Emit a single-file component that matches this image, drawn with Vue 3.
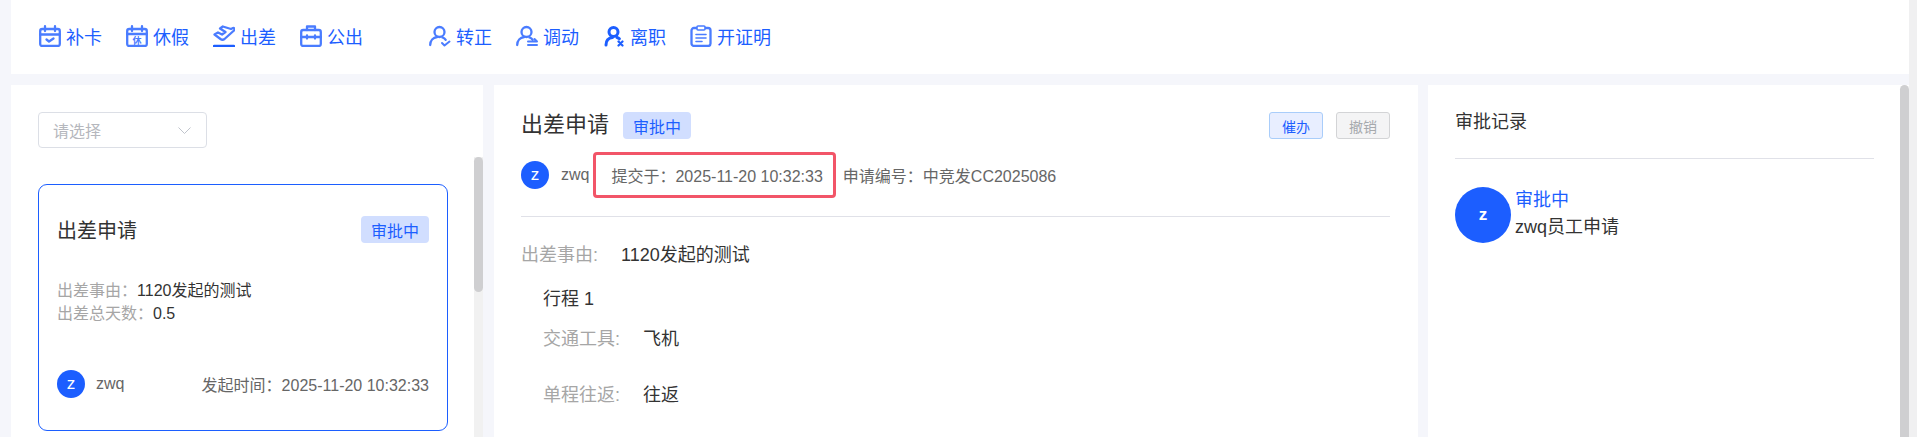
<template>
  <div class="page">
    <div class="content">
      <div class="topbar">
        <div class="group">
          <a v-for="item in leftLinks" :key="item.text" class="link">
            <svg class="ico" viewBox="0 0 22 22" fill="none" stroke="#4a7cff" stroke-width="2.300" stroke-linecap="round" stroke-linejoin="round">
              <g v-if="item.icon === 'card'">
                <rect x="1.200" y="4" width="19.600" height="17" rx="2" />
                <path d="M1 9.500h20M6 1.200v4.800M16 1.200v4.800" />
                <path d="M7.500 14.500l2.500 2 4.500-3" />
              </g>
              <g v-else-if="item.icon === 'rest'">
                <rect x="1.200" y="4" width="19.600" height="17" rx="2" />
                <path d="M1 9h20M6 1.200v4.800M16 1.200v4.800" />
                <text x="11" y="18.500" text-anchor="middle" font-size="9" font-weight="700" fill="#4a7cff" stroke="none">休</text>
              </g>
              <g v-else-if="item.icon === 'trip'">
                <path d="M1.500 9.500L5 7.500l4 2 3.500-2.500L7 3.500 9.800 1.500 18 4l2-1c1.300-.4 2 1.600 1 2.500L11.500 14c-1.300 1-2.700 1-4 0z" />
                <path d="M1 21h20" stroke="#1c5eff" />
              </g>
              <g v-else>
                <rect x="1.200" y="5" width="19.600" height="16" rx="2" />
                <path d="M7 5V1.500h8V5M1 12h20M7 10.500v3M15 10.500v3" />
              </g>
            </svg>
            <span>{{ item.text }}</span>
          </a>
        </div>
        <div class="group">
          <a v-for="item in rightLinks" :key="item.text" class="link">
            <svg class="ico" viewBox="0 0 22 22" fill="none" stroke="#4a7cff" stroke-width="2.300" stroke-linecap="round" stroke-linejoin="round">
              <g v-if="item.icon === 'regular'">
                <circle cx="10.500" cy="7" r="5" />
                <path d="M1.200 20c0-4.500 3-7.500 7-8M13.500 12.500c1.500.5 2.500 1.300 3.200 2.300" />
                <path d="M13 18l2.500 2.500 5-4" stroke-width="2" />
              </g>
              <g v-else-if="item.icon === 'move'">
                <circle cx="10.500" cy="7" r="5" />
                <path d="M1.200 20c0-4.500 3-7.500 7-8M13.500 12.500c1.500.5 2.500 1.300 3.200 2.300" />
                <path d="M12 16.500h9l-2.500-2.500M21 20h-9" stroke-width="2" />
              </g>
              <g v-else-if="item.icon === 'leave'" stroke="#1c5eff" stroke-width="3">
                <circle cx="10.500" cy="7" r="4.500" />
                <path d="M3 20c0-4.500 2.500-7 6.500-7.500M14 12.500c1 .3 1.800.7 2.400 1.300" />
                <path d="M15.500 16.500l4 4M19.500 16.500l-4 4" stroke-width="2.200" />
              </g>
              <g v-else>
                <rect x="1.500" y="3" width="19" height="18" rx="2.500" />
                <rect x="7" y="1" width="8" height="4" rx="1" fill="#fff" stroke-width="1.600" />
                <path d="M6 9.500h10M6 13h10M6 16.500h6" stroke-width="1.600" />
              </g>
            </svg>
            <span>{{ item.text }}</span>
          </a>
        </div>
      </div>

      <div class="columns">
        <div class="left">
          <div class="select">
            <span>请选择</span>
            <svg width="15" height="9" viewBox="0 0 15 9" fill="none" stroke="#c0c4cc" stroke-width="1"><path d="M1.500 1.500l6 6 6-6" /></svg>
          </div>
          <div class="card">
            <div class="card-head">
              <span class="card-title">出差申请</span>
              <span class="tag">审批中</span>
            </div>
            <div class="card-rows">
              <div><span class="label">出差事由：</span><span class="val">1120发起的测试</span></div>
              <div><span class="label">出差总天数：</span><span class="val">0.5</span></div>
            </div>
            <div class="card-foot">
              <div class="who">
                <span class="avatar">z</span>
                <span class="gray">zwq</span>
              </div>
              <span class="gray">发起时间：2025-11-20 10:32:33</span>
            </div>
          </div>
          <div class="thumb left-thumb"></div>
        </div>

        <div class="middle">
          <div class="mid-head">
            <div class="mid-title">
              <h2>出差申请</h2>
              <span class="tag">审批中</span>
            </div>
            <div class="btns">
              <span class="btn urge">催办</span>
              <span class="btn revoke">撤销</span>
            </div>
          </div>
          <div class="meta">
            <span class="avatar">z</span>
            <span class="gray zwq">zwq</span>
            <span class="gray submit">提交于：2025-11-20 10:32:33<i class="mark"></i></span>
            <span class="gray">申请编号：中竞发CC2025086</span>
          </div>
          <div class="detail">
            <div class="line"><span class="dlabel first">出差事由:</span><span class="val">1120发起的测试</span></div>
            <div class="trip">
              <div class="trip-title">行程 1</div>
              <div class="line tool"><span class="dlabel">交通工具:</span><span class="val">飞机</span></div>
              <div class="line way"><span class="dlabel">单程往返:</span><span class="val">往返</span></div>
            </div>
          </div>
        </div>

        <div class="right">
          <div class="right-title">审批记录</div>
          <div class="record">
            <span class="avatar big">z</span>
            <div class="record-text">
              <div class="blue">审批中</div>
              <div class="val">zwq员工申请</div>
            </div>
          </div>
          <div class="thumb page-thumb"></div>
        </div>
      </div>
    </div>
    <div class="track"></div>
  </div>
</template>

<script setup>
const leftLinks = [
  { text: '补卡', icon: 'card' },
  { text: '休假', icon: 'rest' },
  { text: '出差', icon: 'trip' },
  { text: '公出', icon: 'out' }
]
const rightLinks = [
  { text: '转正', icon: 'regular' },
  { text: '调动', icon: 'move' },
  { text: '离职', icon: 'leave' },
  { text: '开证明', icon: 'cert' }
]
</script>

<style>
html, body { margin: 0; overflow: hidden; }
</style>

<style scoped>
.page { display: flex; height: 437px; overflow: hidden; background: #f5f6fb; font-family: "Liberation Sans", "Noto Sans CJK SC", sans-serif; color: #333; }
.content { flex: 1; min-width: 0; padding-left: 11px; display: flex; flex-direction: column; gap: 11px; }
.track { width: 8px; background: #f0f0f1; }
.topbar { height: 74px; box-sizing: border-box; padding: 0 0 3px 28px; flex: none; background: #fff; display: flex; align-items: center; gap: 66px; color: #1c5eff; font-size: 18px; }
.group { display: flex; gap: 24px; }
.link { display: flex; align-items: center; gap: 5px; height: 24px; }
.ico { width: 22px; height: 22px; flex: none; }
.columns { flex: 1; display: flex; gap: 10px; min-height: 0; }
.left, .middle, .right { background: #fff; position: relative; overflow: hidden; }
.left { width: 472px; margin-right: 1px; padding: 27px 0 0 27px; box-sizing: border-box; }
.left::after { content: ""; position: absolute; right: 0; top: 72px; bottom: 0; width: 9px; background: #f1f1f1; }
.thumb { position: absolute; width: 9px; right: 0; background: #cfcfd1; border-radius: 5px; z-index: 1; }
.left-thumb { top: 72px; height: 135px; }
.page-thumb { top: 0; bottom: -10px; border-radius: 5px 5px 0 0; }
.select { width: 169px; height: 36px; box-sizing: border-box; border: 1px solid #dcdfe6; border-radius: 4px; display: flex; align-items: center; justify-content: space-between; padding: 0 14px; color: #b5b7bd; font-size: 16px; }
.card { width: 410px; height: 247px; margin-top: 36px; box-sizing: border-box; border: 1px solid #1c5eff; border-radius: 9px; padding: 30px 18px 0 19px; display: flex; flex-direction: column; }
.card-head { display: flex; align-items: center; justify-content: space-between; }
.card-title { font-size: 20px; margin-left: -1px; }
.tag { display: inline-flex; align-items: center; justify-content: center; width: 68px; height: 27px; background: #d1deff; color: #1c5eff; border-radius: 4px; font-size: 16px; }
.card-rows { margin-top: 35px; margin-left: -1px; font-size: 16px; line-height: 23px; }
.label { color: #a6a6a6; }
.val { color: #333; }
.card-foot { margin-top: 45px; margin-left: -1px; display: flex; align-items: center; justify-content: space-between; font-size: 16px; }
.who { display: flex; align-items: center; gap: 11px; }
.gray { color: #666; }
.avatar { width: 28px; height: 28px; border-radius: 50%; background: #1c5eff; color: #fff; display: inline-flex; align-items: center; justify-content: center; font-size: 17px; font-weight: 400; flex: none; }
.middle { width: 924px; padding: 0 28px 0 27px; box-sizing: border-box; }
.mid-head { display: flex; justify-content: space-between; align-items: center; margin-top: 27px; height: 27px; }
.mid-title { display: flex; align-items: center; gap: 14px; }
h2 { margin: 0 0 8px; font-size: 22px; font-weight: 400; color: #333; }
.btns { display: flex; gap: 13px; }
.btn { width: 54px; height: 27px; box-sizing: border-box; border-radius: 3px; display: flex; align-items: center; justify-content: center; font-size: 14px; border: 1px solid; }
.urge { background: #e8eeff; border-color: #a9cdfa; color: #1c5eff; }
.revoke { background: #f4f4f5; border-color: #d3d4d6; color: #a6a9ad; }
.meta { display: flex; align-items: center; margin-top: 22px; height: 28px; font-size: 16px; padding-bottom: 27px; border-bottom: 1px solid #e0e1e8; }
.zwq { margin-left: 12px; }
.submit { position: relative; margin-left: 22px; margin-right: 20px; }
.mark { position: absolute; left: -18px; right: -13px; top: -11px; bottom: -11px; border: 3px solid #f25568; border-radius: 4px; }
.detail { font-size: 18px; }
.line { display: flex; align-items: center; }
.dlabel { color: #a6a6a6; width: 100px; flex: none; }
.detail > .line { margin-top: 26px; line-height: 24px; }
.trip { padding-left: 22px; }
.trip-title { margin-top: 20px; line-height: 24px; color: #333; }
.tool { margin-top: 16px; line-height: 24px; }
.way { margin-top: 32px; line-height: 24px; }
.right { flex: 1; padding: 0 35px 0 27px; overflow: hidden; }
.right-title { font-size: 18px; line-height: 24px; padding: 25px 0 24px; border-bottom: 1px solid #e0e1e8; color: #333; }
.record { display: flex; gap: 4px; margin-top: 28px; }
.avatar.big { width: 56px; height: 56px; font-size: 17px; font-weight: 700; }
.record-text { font-size: 18px; line-height: 27px; }
.blue { color: #1c5eff; }
</style>
